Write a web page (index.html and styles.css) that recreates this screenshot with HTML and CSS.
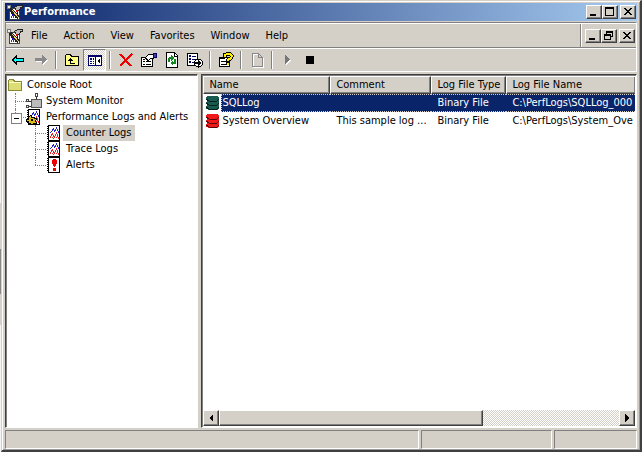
FILE: index.html
```html
<!DOCTYPE html>
<html lang="en">
<head>
<meta charset="utf-8">
<title>Performance</title>
<link rel="stylesheet" href="styles.css">
</head>
<body>
<svg class="defs" aria-hidden="true">
  <symbol id="perf" viewBox="0 0 16 16">
    <path fill="#fff" stroke="#444" d="M2.500 4.500h10v11h-10z"/>
    <path fill="#b9b9b9" stroke="#222" d="M7.500 3.500l3-2h5v2h-2l-1 3h-3z"/>
    <path fill="#eee" stroke="#777" d="M.5 1.500h3v3h-3z"/>
    <path fill="#00a" d="M4 7h1v3H4zM5 10h1v2H5zM10 8h1v3h-1zM8 12h1v2H8z"/>
    <path fill="#d00" d="M4 12h1v2H4zM6 11h1v3H6zM7 9h1v2H7zM9 6h2v2H9zM10 11h1v3h-1z"/>
    <path stroke="#222" stroke-width="3" d="M3 5l9 9"/>
    <path stroke="#fc6" stroke-width="1" d="M5 6l7 8"/>
  </symbol>
  <symbol id="sheet" viewBox="0 0 16 16">
    <path fill="#fff" stroke="#000" d="M2.500.5h11v15h-11z"/>
    <path stroke="#000" stroke-width="2" stroke-dasharray="1 1" d="M2 1v14"/>
  </symbol>
  <symbol id="chart" viewBox="0 0 16 16">
    <use href="#sheet"/>
    <path fill="#22c" d="M4 7h1v1H4zM5 6h1v1H5zM6 4h1v2H6zM7 3h1v2H7zM8 5h1v2H8zM9 4h1v2H9zM10 2h1v2h-1zM11 4h1v2h-1zM12 6h1v2h-1z"/>
    <path fill="#e22" d="M4 11h1v2H4zM5 9h1v2H5zM6 8h1v2H6zM7 10h1v2H7zM8 11h1v2H8zM9 9h1v2H9zM10 7h1v2h-1zM11 9h1v3h-1zM12 12h1v2h-1zM6 12h1v1H6zM7 13h1v1H7zM10 12h1v1h-1z"/>
  </symbol>
  <symbol id="disk" viewBox="0 0 16 16">
    <path d="M3 1h9l2 1v3l-1 1 1 1v3l-1 1 1 1v2l-2 1H4l-3-1v-3l1-1-1-1V7l1-1-1-1V2z" fill="currentColor"/>
    <path fill="none" stroke="#000" stroke-opacity=".65" d="M1 4l3 2h8l2-2M1 8l3 2h8l2-2M1 12l3 2h8l2-2"/>
  </symbol>
</svg>
<div class="window">
  <header class="title">
    <svg class="icon"><use href="#perf"/></svg>
    <h1>Performance</h1>
    <div class="controls">
      <button aria-label="Minimize"><svg viewBox="0 0 12 10"><path d="M2 7h6v2H2z"/></svg></button>
      <button aria-label="Maximize"><svg viewBox="0 0 12 10"><path fill-rule="evenodd" d="M1 0h9v9H1zM2 2v6h7V2z"/></svg></button>
      <button class="close" aria-label="Close"><svg viewBox="0 0 12 10"><path d="M2 1h2v1h1v1h2V2h1V1h2v1H9v1H8v1H7v1h1v1h1v1h1v1H8V7H7V6H5v1H4v1H2V7h1V6h1V5h1V4H4V3H3V2H2z"/></svg></button>
    </div>
  </header>
  <div class="bars">
    <div class="menubar">
      <nav>
        <svg class="icon"><use href="#perf"/></svg>
        <button>File</button><button>Action</button><button>View</button><button>Favorites</button><button>Window</button><button>Help</button>
      </nav>
      <div class="controls child">
        <button aria-label="Minimize console"><svg viewBox="0 0 12 10"><path d="M2 7h6v2H2z"/></svg></button>
        <button aria-label="Restore console"><svg viewBox="0 0 12 10"><path fill-rule="evenodd" d="M3 0h7v6H8v3H1V3h2zM4 2v1h4v2h1V2zM2 5v3h5V5z"/></svg></button>
        <button class="close" aria-label="Close console"><svg viewBox="0 0 12 10"><path d="M2 1h2v1h1v1h2V2h1V1h2v1H9v1H8v1H7v1h1v1h1v1h1v1H8V7H7V6H5v1H4v1H2V7h1V6h1V5h1V4H4V3H3V2H2z"/></svg></button>
      </div>
    </div>
    <div class="toolbar">
      <button aria-label="Back"><svg viewBox="0 0 16 16"><path fill="#0ff" stroke="#000" d="M2.500 8l4-4v2.500h7v3h-7V12z"/></svg></button>
      <button aria-label="Forward"><svg viewBox="0 0 16 16"><path fill="#fff" d="M3 7h7V4l5 5-5 4v-3H3z"/><path fill="#888" d="M2 6h7V3l5 5-5 4V9H2z"/></svg></button>
      <i class="sep"></i>
      <button aria-label="Up one level"><svg viewBox="0 0 16 16"><path fill="#ff8" stroke="#000" d="M1.500 13.500v-10l1-1h4l1 2h7v9z"/><path d="M6 6h1v1h1v1h1v1H7v2h4v1H6V9H4V8h1V7h1z"/></svg></button>
      <button class="pressed" aria-label="Show or hide console tree" aria-pressed="true"><svg viewBox="0 0 16 16"><path fill="#fff" stroke="#006" d="M1.500 3.500h13v10h-13zM8.500 3v10"/><path fill="#006" d="M1 3h14v2H1zM3 6h2v2H3zM6 6h1v2H6zM3 9h2v1H3zM6 9h1v1H6zM3 11h2v1H3zM6 11h1v1H6z"/><path d="M13 6v6l-3-3z"/></svg></button>
      <i class="sep"></i>
      <button aria-label="Delete"><svg viewBox="0 0 16 16"><path stroke="#e00" stroke-width="2" fill="none" d="M2 2l11 12M14 2L2 14"/></svg></button>
      <button aria-label="Properties"><svg viewBox="0 0 16 16"><path fill="#fff" stroke="#000" d="M.5 5.500h11v9H.5z"/><path d="M2 9h2v1H2zM5 9h5v1H5zM2 12h2v1H2zM5 12h5v1H5zM2 7h2v1H2z"/><path fill="#fff" stroke="#000" d="M4.500 5.500l3-3h5v4h-3l-2 2-2-1z"/><path fill="#449" stroke="#006" d="M12.500 1.500h3v4h-3z"/></svg></button>
      <button aria-label="Refresh"><svg viewBox="0 0 16 16"><path fill="#fff" stroke="#000" d="M2.500.5h8l3 3v12h-11z"/><path fill="none" stroke="#000" d="M10.500 1v3h3"/><path fill="#182" d="M7 3l3 3-3 3V7H6v3H4V6l1-1h2zM9 14l-3-3 3-3v2h1V7h2v4l-1 1H9z"/></svg></button>
      <button aria-label="Export list"><svg viewBox="0 0 16 16"><path fill="#fff" stroke="#000" d="M.5 1.500h10v12H.5z"/><path fill="#006" d="M2 3h2v2H2zM5 4h4v1H5zM2 6h2v2H2zM5 7h4v1H5zM2 9h2v2H2zM5 10h3v1H5z"/><circle cx="11.500" cy="11" r="4" fill="#fff" stroke="#000"/><path d="M8 10h3V8l4 3-4 3v-2H8z"/></svg></button>
      <i class="sep"></i>
      <button aria-label="Help"><svg viewBox="0 0 16 16"><path fill="#fff" stroke="#000" d="M1.500 5.500h10v9h-10z"/><path d="M1 5h6v2H1zM3 9h5v1H3zM3 12h6v1H3z"/><path fill="none" stroke="#000" stroke-width="4" d="M7 5V3l2-1h3l2 2-1 2-3 2v4"/><path fill="none" stroke="#fe0" stroke-width="2" d="M7 5V3l2-1h3l2 2-1 2-3 2v1M10 11v2"/></svg></button>
      <i class="sep"></i>
      <button aria-label="New" disabled><svg viewBox="0 0 16 16"><path fill="none" stroke="#fff" d="M4.500 2.500h6l4 4v9h-10z"/><path fill="none" stroke="#888" d="M3.500 1.500h6l4 4v9h-10zM9.500 1.500v4h4"/></svg></button>
      <i class="sep"></i>
      <button aria-label="Start" disabled><svg viewBox="0 0 16 16"><path fill="#fff" d="M6 4l5 5-5 4z"/><path fill="#777" d="M5 3l5 5-5 4z"/></svg></button>
      <button aria-label="Stop"><svg viewBox="0 0 16 16"><path d="M3 4h8v8H3z"/></svg></button>
    </div>
  </div>
  <main>
    <ul class="tree">
      <li><span class="node"><svg class="icon"><path fill="#dd7" stroke="#883" d="M1.500 13.500v-10l1-1h4l1 2h7v9z"/><path fill="#ffc" d="M2 5h12v1H2z"/></svg><span>Console Root</span></span>
        <ul>
          <li><span class="node"><i class="twig"></i><svg class="icon"><path fill="#bbb" stroke="#555" d="M5.500 6.500h10v8h-10z"/><path fill="none" stroke="#333" d="M10.500 6V3M5 8H3M5 13H3"/><path fill="#fff" stroke="#444" d="M9.500.5h2v3h-2zM.5 6.500h2v2h-2zM.5 12.500h2v2h-2z"/></svg><span>System Monitor</span></span></li>
          <li><span class="node"><i class="twig box"></i><svg class="icon"><use href="#chart"/><path fill="#000" d="M2 7h2V6h2v2h3v1h2v2h-1v2h1v2H8v1H4v-1H2v-2H0v-3h2z"/><path fill="#db1" d="M3 8h1V7h1v2h3v1h2v1H9v2h1v1H7v1H5v-1H3v-2H1v-1h2z"/><path d="M5 10h2v2H5z"/></svg><span>Performance Logs and Alerts</span></span>
            <ul>
              <li><span class="node"><i class="twig"></i><svg class="icon"><use href="#chart"/></svg><span class="current">Counter Logs</span></span></li>
              <li><span class="node"><i class="twig"></i><svg class="icon"><use href="#chart"/></svg><span>Trace Logs</span></span></li>
              <li><span class="node"><i class="twig"></i><svg class="icon"><use href="#sheet"/><path fill="#e00" d="M7 2h3v1h1v4h-1v2H9v1H8V9H7V7H6V3h1zM7 11h3v3H7z"/></svg><span>Alerts</span></span></li>
            </ul>
          </li>
        </ul>
      </li>
    </ul>
    <section class="list">
      <div class="view">
        <table>
          <colgroup><col class="c1"><col class="c2"><col class="c3"><col></colgroup>
          <thead><tr><th>Name</th><th>Comment</th><th>Log File Type</th><th>Log File Name</th></tr></thead>
          <tbody>
            <tr class="selected"><td><span class="name"><svg class="icon green"><use href="#disk"/></svg><span>SQLLog</span></span></td><td></td><td>Binary File</td><td>C:\PerfLogs\SQLLog_000</td></tr>
            <tr><td><span class="name"><svg class="icon red"><use href="#disk"/></svg><span>System Overview</span></span></td><td>This sample log ...</td><td>Binary File</td><td>C:\PerfLogs\System_Ove</td></tr>
          </tbody>
        </table>
      </div>
      <div class="scroll">
        <button aria-label="Scroll left"><svg viewBox="0 0 8 8"><path d="M6 0v8L2 4z"/></svg></button>
        <div class="track"><div class="thumb"></div></div>
        <button aria-label="Scroll right"><svg viewBox="0 0 8 8"><path d="M2 0v8l4-4z"/></svg></button>
      </div>
    </section>
  </main>
  <footer><div></div><div></div><div></div></footer>
</div>
</body>
</html>
```
FILE: styles.css
```css
* { box-sizing: border-box; }
body {
  margin: 0;
  height: 100vh;
  padding-left: 1px;
  background: linear-gradient(#f4f4f4 45%, #d4d0c8 45% 55%, #888 55% 65%, #d4d0c8 65% 72%, #f4f4f4 72%);
  color: #000;
  font: 11px/16px "DejaVu Sans Condensed", Tahoma, sans-serif;
  overflow: hidden;
}
button { font: inherit; color: inherit; margin: 0; padding: 0; border: 0; background: none; }
ul { list-style: none; margin: 0; padding: 0; }
.defs { position: absolute; width: 0; height: 0; }
.icon { width: 16px; height: 16px; flex: none; display: block; }
svg { shape-rendering: crispEdges; }

.window {
  height: 100%;
  display: flex;
  flex-direction: column;
  padding: 2px 3px 1px;
  background: #d4d0c8;
  border: 1px solid #d4d0c8;
  border-right: 2px solid #404040;
  border-bottom: 2px solid #404040;
  box-shadow: inset 1px 1px #fff, inset -1px -1px #999;
}
.title {
  display: flex;
  align-items: center;
  height: 18px;
  flex: none;
  gap: 1px;
  padding: 0 1px 0 2px;
  color: #fff;
  background: linear-gradient(90deg, #0a246a, #a6caf0);
}
.title h1 { flex: 1; margin: 0; font-size: 11px; font-weight: bold; }
.controls { display: flex; align-items: center; color: #000; }
.controls button {
  width: 16px;
  height: 14px;
  display: grid;
  place-items: center;
  background: #d4d0c8;
  border: 1px solid;
  border-color: #fff #404040 #404040 #fff;
  box-shadow: inset -1px -1px #808080;
}
.controls .close { margin-left: 2px; }
.controls svg { width: 12px; height: 10px; }

.bars { flex: none; margin-top: 1px; border: 1px solid; border-color: #808080 #fff #fff #808080; }
.menubar { display: flex; height: 25px; border-top: 1px solid #fff; border-bottom: 1px solid #808080; }
.menubar nav { flex: 1; display: flex; align-items: center; padding-left: 1px; border-right: 1px solid #808080; }
.menubar nav button { padding: 0 8px; }
.child { padding: 0 1px 0 3px; border-left: 1px solid #fff; }
.toolbar { display: flex; align-items: center; height: 23px; border-top: 1px solid #fff; }
.toolbar button { width: 23px; height: 22px; display: grid; place-items: center; flex: none; }
.toolbar svg { width: 16px; height: 16px; }
.toolbar .pressed {
  border: 1px solid;
  border-color: #808080 #fff #fff #808080;
  background: repeating-conic-gradient(#fff 0 25%, #d4d0c8 0 50%) 0 0 / 2px 2px;
}
.sep { width: 2px; height: 18px; margin: 0 3px; border-left: 1px solid #808080; border-right: 1px solid #fff; }

main { flex: 1; min-height: 0; display: grid; grid-template-columns: 194fr 437fr; gap: 3px; margin-top: 2px; }
.tree, .list {
  min-width: 0;
  background: #fff;
  border: 1px solid;
  border-color: #404040 #fff #fff #404040;
  box-shadow: inset 1px 1px #808080;
}
.tree { padding: 2px 1px; }
.node { display: flex; align-items: center; height: 16px; }
.node > span { margin-left: 1px; padding: 0 3px; white-space: nowrap; }
.node .current { background: #d4d0c8; }
.tree ul { padding-left: 8px; }
.tree ul ul { padding-left: 20px; }
.tree ul li { position: relative; }
.tree ul li::before { content: ""; position: absolute; left: 0; top: 0; bottom: 0; border-left: 1px dotted #808080; }
.tree ul li:last-child::before { bottom: auto; height: 8px; }
.twig { width: 11px; height: 1px; border-top: 1px dotted #808080; position: relative; }
.box::before {
  content: "";
  position: absolute;
  left: -4px;
  top: -5px;
  width: 9px;
  height: 9px;
  border: 1px solid #808080;
  background: linear-gradient(#000, #000) center / 5px 1px no-repeat #fff;
}

.list { display: flex; flex-direction: column; padding: 1px; }
.view { flex: 1; min-height: 0; overflow: hidden; }
table { table-layout: fixed; width: 100%; border-collapse: separate; border-spacing: 0; }
.c1 { width: 127px; }
.c2 { width: 101px; }
.c3 { width: 75px; }
th, td { padding: 0 0 0 5px; text-align: left; font-weight: normal; white-space: nowrap; overflow: hidden; }
th {
  height: 18px;
  background: #d4d0c8;
  border: 1px solid;
  border-color: #fff #404040 #404040 #fff;
  box-shadow: inset -1px -1px #808080;
}
th:last-child { border-right: 0; }
td { height: 18px; padding-left: 6px; }
td:first-child { padding-left: 2px; }
.name { display: flex; align-items: center; gap: 1px; }
.name span { flex: 1; }
.selected td { color: #fff; background: #0a246a; border-top: 1px dotted #d4d0c8; border-bottom: 1px dotted #d4d0c8; }
.selected td:first-child { border: 0; padding-left: 0; background: linear-gradient(90deg, #fff 18px, #0a246a 18px); }
.selected .name { padding-left: 2px; }
.selected .name span { border: 1px dotted #d4d0c8; border-right: 0; margin-left: -1px; }
.green { color: #175b50; }
.red { color: #f01818; }
.scroll { display: flex; height: 16px; flex: none; }
.scroll button, .thumb {
  background: #d4d0c8;
  border: 1px solid;
  border-color: #fff #404040 #404040 #fff;
  box-shadow: inset -1px -1px #808080;
}
.scroll button { width: 16px; display: grid; place-items: center; }
.scroll svg { width: 8px; height: 8px; }
.track { flex: 1; background: repeating-conic-gradient(#fff 0 25%, #d4d0c8 0 50%) 0 0 / 2px 2px; }
.thumb { width: 66%; height: 100%; }

footer { flex: none; display: grid; grid-template-columns: 413fr 131fr 83fr; gap: 2px; height: 19px; margin-top: 2px; }
footer div { border: 1px solid; border-color: #808080 #fff #fff #808080; }
```
